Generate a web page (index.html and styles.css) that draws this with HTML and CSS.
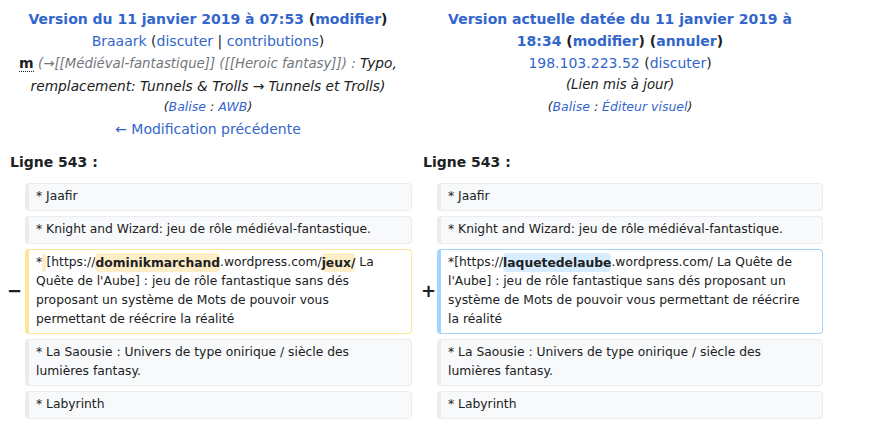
FILE: index.html
```html
<!DOCTYPE html>
<html lang="fr">
<head>
<meta charset="utf-8">
<title>Différence entre les versions</title>
<link rel="stylesheet" href="styles.css">
</head>
<body>
<div class="diff">
  <div class="title title-old">
    <div class="rev-head"><a href="#">Version du 11 janvier 2019 à 07:53</a> (<a href="#">modifier</a>)</div>
    <div><a href="#" class="plain">Braaark</a> (<a href="#" class="plain">discuter</a> | <a href="#" class="plain">contributions</a>)</div>
    <div class="comment comment-old"><abbr class="minor" title="Modification mineure">m</abbr> <i class="auto">(→[[Médiéval-fantastique]] ([[Heroic fantasy]]) :</i> <i>Typo, remplacement: Tunnels &amp; Trolls → Tunnels et Trolls)</i></div>
    <div class="tags">(<a href="#">Balise</a> : <a href="#">AWB</a>)</div>
    <div><a href="#" class="plain">← Modification précédente</a></div>
  </div>
  <div class="title title-new">
    <div class="rev-head"><a href="#">Version actuelle datée du 11 janvier 2019 à 18:34</a> (<a href="#">modifier</a>) (<a href="#">annuler</a>)</div>
    <div><a href="#" class="plain">198.103.223.52</a> (<a href="#" class="plain">discuter</a>)</div>
    <div class="comment"><i>(Lien mis à jour)</i></div>
    <div class="tags">(<a href="#">Balise</a> : <a href="#">Éditeur visuel</a>)</div>
  </div>

  <div class="lineno lineno-old">Ligne 543 :</div>
  <div class="lineno lineno-new">Ligne 543 :</div>

  <div class="marker"></div>
  <div class="cell context">* Jaafir</div>
  <div class="marker"></div>
  <div class="cell context">* Jaafir</div>

  <div class="marker"></div>
  <div class="cell context">* Knight and Wizard: jeu de rôle médiéval-fantastique.</div>
  <div class="marker"></div>
  <div class="cell context">* Knight and Wizard: jeu de rôle médiéval-fantastique.</div>

  <div class="marker marker-del">−</div>
  <div class="cell deleted">*<del class="chg"> </del>[https://<del class="chg">dominikmarchand</del>.wordpress.com/<del class="chg">jeux/</del> La Quête de l'Aube] : jeu de rôle fantastique sans dés proposant un système de Mots de pouvoir vous permettant de réécrire la réalité</div>
  <div class="marker marker-add">+</div>
  <div class="cell added">*[https://<ins class="chg">laquetedelaube</ins>.wordpress.com/ La Quête de l'Aube] : jeu de rôle fantastique sans dés proposant un système de Mots de pouvoir vous permettant de réécrire la réalité</div>

  <div class="marker"></div>
  <div class="cell context">* La Saousie : Univers de type onirique / siècle des lumières fantasy.</div>
  <div class="marker"></div>
  <div class="cell context">* La Saousie : Univers de type onirique / siècle des lumières fantasy.</div>

  <div class="marker"></div>
  <div class="cell context">* Labyrinth</div>
  <div class="marker"></div>
  <div class="cell context">* Labyrinth</div>
</div>
</body>
</html>
```

FILE: styles.css
```css
html, body {
  margin: 0;
  padding: 0;
  background: #ffffff;
}

body {
  margin: 8px;
  font-family: "DejaVu Sans", sans-serif;
  font-size: 14px;
  line-height: 1.6;
  color: #202122;
}

a {
  color: #3366cc;
  text-decoration: none;
}

.diff {
  display: grid;
  grid-template-columns: 17px 387px 25px 386px;
  row-gap: 5px;
  align-items: stretch;
}

.title {
  text-align: center;
  line-height: 22px;
}

.title-old {
  grid-column: 1 / 3;
  padding: 0 10px 0 6px;
}

.title-new {
  grid-column: 3 / 5;
  padding: 0 10px 0 15px;
}

.title > div {
  height: 22px;
}

.title > .comment-old {
  height: 44px;
}

.rev-head {
  font-weight: bold;
}

.title-new > .rev-head {
  height: 44px;
}

.comment {
  font-size: 13.3px;
  line-height: 22px;
}

.comment-old {
  font-size: 13.75px;
}

.comment i,
.tags {
  font-style: italic;
}

.auto {
  color: #72777d;
  font-size: 13.3px;
}

.minor {
  font-size: 14px;
  line-height: 1;
  font-weight: bold;
  text-decoration: none;
  border-bottom: 1px dotted #202122;
  cursor: help;
}

.tags {
  font-size: 12.5px;
  line-height: 22px;
}

.lineno {
  font-weight: bold;
  line-height: 22.4px;
  padding: 5.8px 0 4.5px;
}

.lineno-old {
  grid-column: 1 / 3;
  padding-left: 2px;
}

.lineno-new {
  grid-column: 3 / 5;
  padding-left: 11px;
}

.marker {
  display: flex;
  align-items: center;
  justify-content: flex-end;
  font-weight: bold;
  font-size: 18px;
  line-height: 1;
}

.marker-del {
  padding-right: 3px;
}

.marker-add {
  padding-right: 1px;
}

.cell {
  font-size: 12.32px;
  line-height: 19px;
  padding: 3.5px 10px 3.5px 7px;
  border-style: solid;
  border-width: 1px 1px 1px 4px;
  border-radius: 4px;
  white-space: pre-wrap;
  overflow-wrap: break-word;
}

.context {
  background: #f8f9fa;
  border-color: #eaecf0;
}

.deleted {
  background: #ffffff;
  border-color: #ffe49c;
}

.added {
  background: #ffffff;
  border-color: #a3d3ff;
}

.chg {
  font-weight: bold;
  text-decoration: none;
  border-radius: 4px;
  padding: 2.5px 0;
}

.deleted .chg {
  background: #feeec8;
}

.added .chg {
  background: #d8ecff;
}
```
